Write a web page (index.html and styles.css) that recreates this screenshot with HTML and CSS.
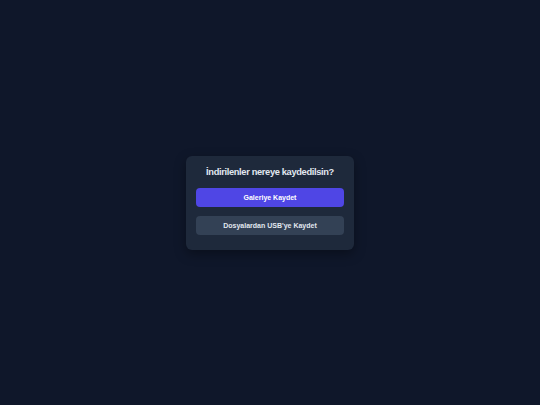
FILE: index.html
```html
<!DOCTYPE html>
<html lang="tr">
<head>
<meta charset="utf-8">
<link rel="stylesheet" href="styles.css">
</head>
<body>
<div class="overlay">
  <div class="dialog">
    <h2 class="title">İndirilenler nereye kaydedilsin?</h2>
    <button class="btn btn-primary">Galeriye Kaydet</button>
    <button class="btn btn-secondary">Dosyalardan USB'ye Kaydet</button>
  </div>
</div>
</body>
</html>
```
FILE: styles.css
```css
html, body {
  margin: 0;
  padding: 0;
  background: #0f172a;
  font-family: "Liberation Sans", Arial, sans-serif;
}
.overlay {
  width: 540px;
  height: 405px;
  display: flex;
  align-items: center;
  justify-content: center;
}
.dialog {
  width: 168px;
  box-sizing: border-box;
  background: #1e293b;
  border-radius: 6px;
  padding: 10px 10px 15px;
  display: flex;
  flex-direction: column;
  box-shadow: 0 4px 12px rgba(0, 0, 0, 0.35);
}
.title {
  margin: 0 0 10px;
  font-size: 9.3px;
  letter-spacing: -0.35px;
  line-height: 12px;
  font-weight: bold;
  color: #e2e8f0;
  text-align: center;
  white-space: nowrap;
}
.btn {
  border: none;
  height: 19px;
  border-radius: 4px;
  font-family: "Liberation Sans", Arial, sans-serif;
  font-size: 7px;
  font-weight: bold;
  color: #ffffff;
  padding: 0;
}
.btn-primary {
  background: #4f46e5;
  margin-bottom: 9px;
}
.btn-secondary {
  background: #334155;
  color: #e2e8f0;
}
```
